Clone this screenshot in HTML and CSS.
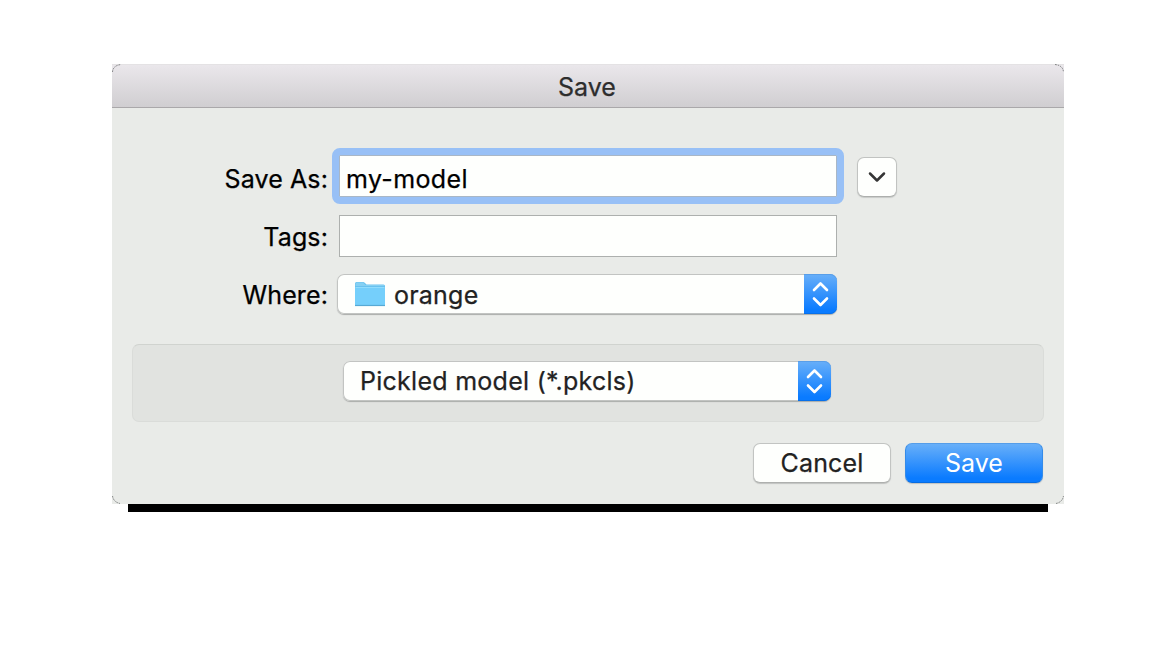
FILE: index.html
```html
<!DOCTYPE html>
<html lang="en">
<head>
<meta charset="utf-8">
<title>Save</title>
<link rel="stylesheet" href="styles.css">
</head>
<body>
<main class="dialog">
  <header class="titlebar"><span>Save</span></header>
  <svg class="corners" viewBox="0 0 952 440" fill="none" stroke="#77797a" stroke-dasharray="1.5 1">
    <path d="M0.5 8Q1 1.500 9 .5M943 .5Q951 1.500 951.500 8M0.500 432Q1.500 438 8 439.500M944 439.500Q950.500 438 951.500 432"/>
  </svg>
  <section class="form">
    <div class="row">
      <label class="label">Save As:</label>
      <div class="field focused"><span>my-model</span></div>
      <button class="expand" aria-label="Expand"><svg width="18" height="12" viewBox="0 0 18 12" fill="none" stroke="#353535" stroke-width="2.500" stroke-linecap="round" stroke-linejoin="round"><path d="M2 2.500 9 9.500l7-7"/></svg></button>
    </div>
    <div class="row">
      <label class="label">Tags:</label>
      <div class="field"></div>
    </div>
    <div class="row">
      <label class="label">Where:</label>
      <div class="select location">
        <svg class="folder" width="32" height="26" viewBox="0 0 32 26">
          <path d="M1 24V2.500Q1 1 2.500 1H9Q10 1 11 2l1.500 1.500H29.500Q31 3.500 31 5V24Z" fill="#69c2ef"/>
          <path d="M1.500 5V3Q1.500 1.500 3 1.500H9L11.500 4H29.500Q30.500 4 30.500 5Z" fill="#85d0f3"/>
          <path d="M1 6.500H31V24Q31 25 30 25H2Q1 25 1 24Z" fill="#75cffb"/>
          <path d="M1.500 6.500H30.500" stroke="#91dcfc"/>
          <path d="M1 24.500H31" stroke="#57a9d4" stroke-width="1.200"/>
        </svg>
        <span class="value">orange</span>
        <span class="stepper"><svg width="18" height="26" viewBox="0 0 18 26" fill="none" stroke="#fff" stroke-width="2.600" stroke-linecap="round" stroke-linejoin="round"><path d="M2 9 8.500 2.500 15 9M2 17.500 8.500 24l6.500-6.500"/></svg></span>
      </div>
    </div>
  </section>
  <section class="format">
    <div class="select filetype">
      <span class="value">Pickled model (*.pkcls)</span>
      <span class="stepper"><svg width="18" height="26" viewBox="0 0 18 26" fill="none" stroke="#fff" stroke-width="2.600" stroke-linecap="round" stroke-linejoin="round"><path d="M2 9 8.500 2.500 15 9M2 17.500 8.500 24l6.500-6.500"/></svg></span>
    </div>
  </section>
  <footer class="actions">
    <button class="button"><span>Cancel</span></button>
    <button class="button primary"><span>Save</span></button>
  </footer>
</main>
<div class="base"></div>
</body>
</html>
```
FILE: styles.css
```css
* { box-sizing: border-box; }
body {
  margin: 0;
  padding-top: 64px;
  height: 664px;
  background: #fff;
  color: #000;
  font: 25px/40px Inter, "Liberation Sans", sans-serif;
  -webkit-text-stroke: .25px currentColor;
  white-space: nowrap;
}
.dialog {
  position: relative;
  width: 952px;
  height: 440px;
  margin: 0 auto;
  background: #e9ebe8;
}
.titlebar {
  height: 44px;
  border-top: 1px solid #e4e2e4;
  border-bottom: 1px solid #aaa8aa;
  background: linear-gradient(#eae7eb, #d0ced1);
  color: #2d2d2d;
  text-align: center;
  line-height: 44px;
  padding-right: 2px;
}
.corners {
  position: absolute;
  inset: 0;
  width: 952px;
  height: 440px;
  pointer-events: none;
}
.form {
  display: grid;
  grid-template-rows: 44px 42px 42px;
  gap: 16px;
  padding: 47px 0 0 4px;
}
.row {
  display: grid;
  grid-template-columns: 212px 498px 40px;
  column-gap: 11px;
  align-items: start;
}
.label {
  text-align: right;
  line-height: 42px;
  padding-top: 1px;
  letter-spacing: .12px;
}
.row:first-child .label { padding-top: 3px; }
.field {
  width: 498px;
  height: 42px;
  border: 1px solid #adb0ae;
  background: #fefffd;
  padding-left: 6px;
  line-height: 46px;
  letter-spacing: .37px;
}
.focused {
  border-color: #a9b7c6;
  outline: 7px solid #98c0f6;
  box-shadow: 0 0 0 1px #98c0f6;
  border-radius: 1px;
}
button { font: inherit; padding: 0; }
.expand {
  display: grid;
  place-items: center;
  width: 40px;
  height: 40px;
  margin: 2px 0 0 9px;
  border: 1px solid #c1c3c1;
  border-bottom-color: #adafad;
  border-radius: 7px;
  background: #fefffd;
  box-shadow: 0 1px 1px #c8cac8;
}
.select {
  display: flex;
  align-items: center;
  height: 40px;
  padding-left: 17px;
  border-radius: 7px;
  background: #fefffd;
  color: #222;
  box-shadow: inset 0 0 0 1px #c2c4c2, 0 1px 1px #aaacaa;
}
.location { width: 500px; margin: 1px 0 0 -2px; letter-spacing: .22px; }
.folder { margin-right: 8px; }
.value { padding-top: 2px; }
.filetype .value { padding-top: 0; }
.stepper {
  display: grid;
  place-items: center;
  width: 33px;
  height: 40px;
  margin-left: auto;
  border-radius: 0 7px 7px 0;
  background: linear-gradient(#68aff9, #0a7bff 90%);
  box-shadow: inset 0 1px #589ee9, inset 0 -1px #0870e9;
}
.format {
  height: 78px;
  margin: 29px 20px 0;
  padding: 16px 0 0 210px;
  border: 1px solid #dadcd9;
  border-top-color: #d0d3cf;
  border-radius: 7px;
  background: #e1e3e0;
}
.filetype { width: 488px; letter-spacing: .27px; }
.actions {
  display: flex;
  justify-content: flex-end;
  gap: 14px;
  padding: 21px 21px 0 0;
}
.button {
  width: 138px;
  height: 40px;
  border: 1px solid #c2c4c2;
  border-bottom-color: #aeb0ae;
  border-radius: 7px;
  background: #fefffd;
  color: #222;
  box-shadow: 0 1px 1px #c0c2c0;
  line-height: 38px;
  letter-spacing: .15px;
}
.primary {
  border-color: #559de9 #348be9 #086ce1;
  background: linear-gradient(#68aff9, #0a7bff 90%);
  color: #fff;
  letter-spacing: 0;
  -webkit-text-stroke: 0;
}
.base { width: 920px; height: 8px; margin: 0 auto; background: #000; }
```
